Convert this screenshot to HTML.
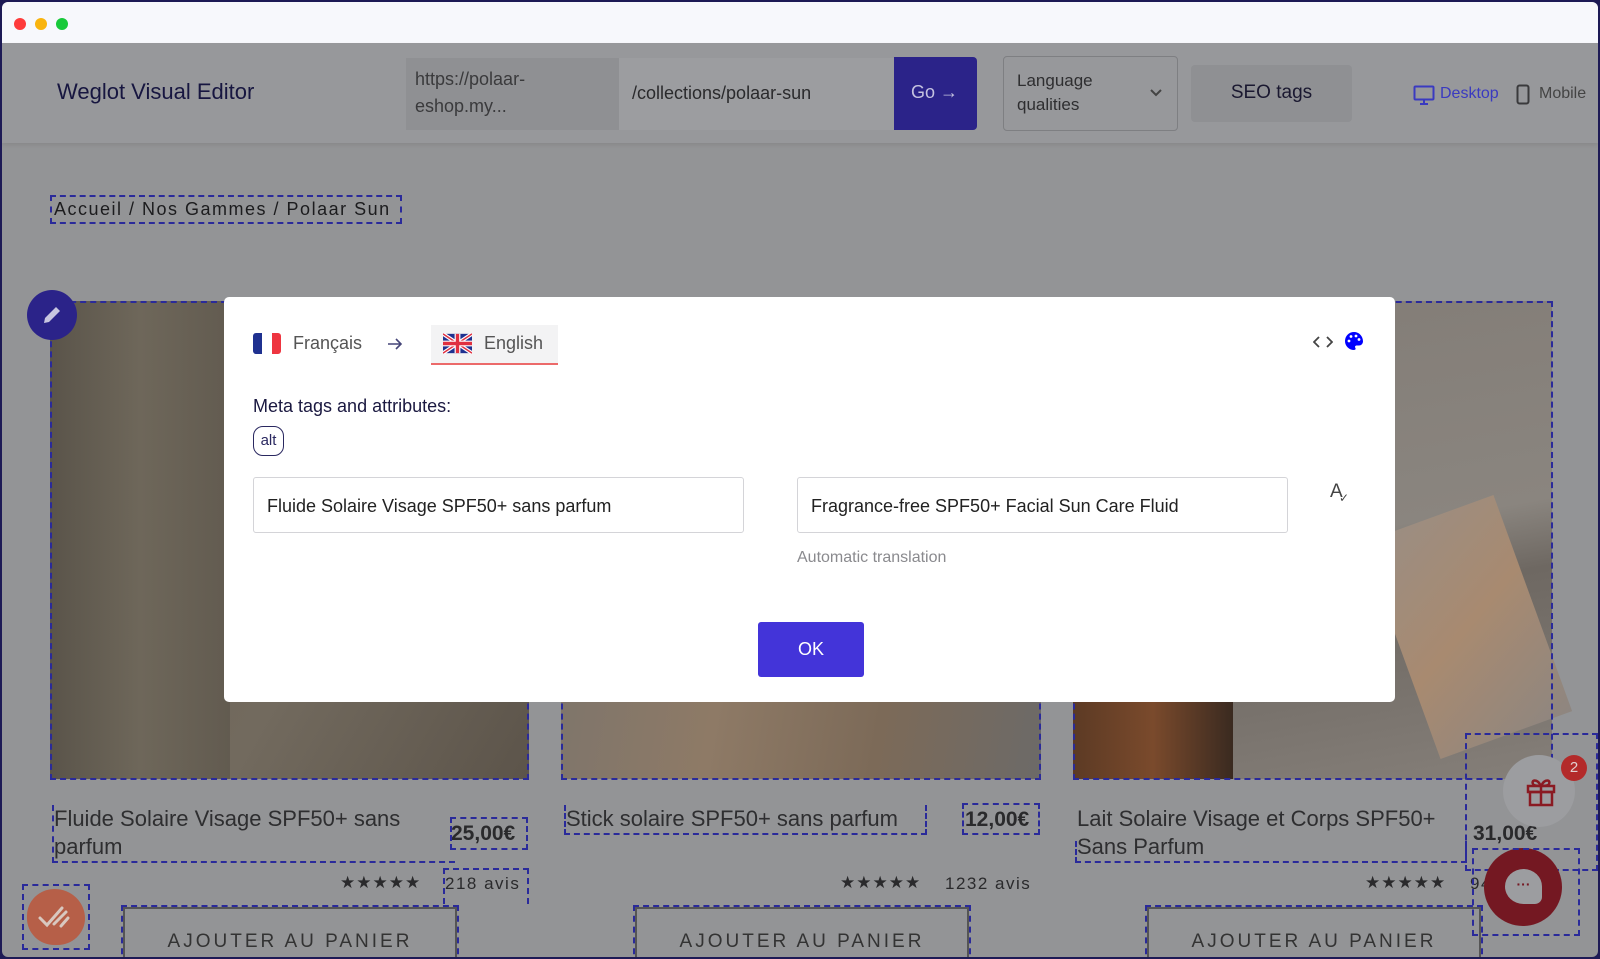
<!DOCTYPE html>
<html><head><meta charset="utf-8"><style>
*{box-sizing:border-box;margin:0;padding:0}
body{width:1600px;height:959px;overflow:hidden;background:#1d1a55;font-family:"Liberation Sans",sans-serif;position:relative}
.abs{position:absolute}
#win{position:absolute;left:2px;top:2px;width:1596px;height:955px;background:#939496;overflow:hidden;border-radius:6px}
.dash{position:absolute;border:2px dashed #2a2a9a}
.ptitle{position:absolute;font-size:22px;color:#2e2e30;line-height:28px}
.price{position:absolute;font-size:21px;font-weight:bold;color:#2a2a2c}
.btn{position:absolute;border:2px solid #555;height:60px;font-size:19px;letter-spacing:3px;color:#333;text-align:center;padding-top:22px}
.stars{position:absolute;font-size:17px;color:#2a2a2c;letter-spacing:1px}
.avis{position:absolute;font-size:17px;color:#2a2a2c;letter-spacing:1.5px}
</style></head><body>
<div id="win">
 <div class="abs" style="left:0;top:0;width:1596px;height:41px;background:#f7f8fc"></div>
 <div class="abs" style="left:12px;top:16px;width:12px;height:12px;border-radius:50%;background:#fe3b3b"></div>
 <div class="abs" style="left:33px;top:16px;width:12px;height:12px;border-radius:50%;background:#f9b40e"></div>
 <div class="abs" style="left:54px;top:16px;width:12px;height:12px;border-radius:50%;background:#18c93a"></div>
 <div class="abs" style="left:0;top:41px;width:1596px;height:100px;background:#97989b;box-shadow:0 2px 4px rgba(0,0,0,.08)"></div>
 <div class="abs" style="left:55px;top:77px;font-size:22px;color:#171640">Weglot Visual Editor</div>
 <div class="abs" style="left:404px;top:56px;width:213px;height:72px;background:#8f9093;color:#3a3a3c;font-size:18px;line-height:27px;padding:8px 9px">https://polaar-<br>eshop.my...</div>
 <div class="abs" style="left:617px;top:56px;width:275px;height:72px;background:#9c9da0;color:#2a2a2c;font-size:18px;padding-top:25px;padding-left:13px">/collections/polaar-sun</div>
 <div class="abs" style="left:892px;top:55px;width:83px;height:73px;background:#2b2389;border-radius:0 4px 4px 0;color:#c5c3e0;font-size:18px;padding-top:25px;padding-left:17px">Go →</div>
 <div class="abs" style="left:1001px;top:54px;width:175px;height:75px;border:1px solid #7e7f82;border-radius:4px;color:#2e2e30;font-size:17px;line-height:24px;padding:12px 13px">Language<br>qualities</div>
 <svg class="abs" style="left:1148px;top:87px" width="12" height="8" viewBox="0 0 12 8"><path d="M1 1l5 5 5-5" stroke="#444" stroke-width="2" fill="none"/></svg>
 <div class="abs" style="left:1189px;top:63px;width:161px;height:57px;background:#8f9093;border-radius:4px;color:#1a1830;font-size:19px;text-align:center;padding-top:17px">SEO tags</div>
 <svg class="abs" style="left:1411px;top:83px" width="22" height="20" viewBox="0 0 22 20"><rect x="1.5" y="1.5" width="19" height="13" rx="1" fill="none" stroke="#3a3ac0" stroke-width="2"/><path d="M7 19h8M11 15v4" stroke="#3a3ac0" stroke-width="2"/></svg>
 <div class="abs" style="left:1438px;top:83px;font-size:16px;color:#3a3ac0">Desktop</div>
 <svg class="abs" style="left:1514px;top:82px" width="14" height="21" viewBox="0 0 14 21"><rect x="1.5" y="1.5" width="11" height="18" rx="2" fill="none" stroke="#3a3a3c" stroke-width="2"/></svg>
 <div class="abs" style="left:1537px;top:83px;font-size:16px;color:#444">Mobile</div>
 <div class="dash" style="left:48px;top:193px;width:352px;height:29px"></div>
 <div class="abs" style="left:52px;top:197px;font-size:18px;color:#1c1c1e;letter-spacing:1.5px">Accueil / Nos Gammes / Polaar Sun</div>
 <!-- product images -->
 <div class="abs" style="left:48px;top:299px;width:479px;height:478px;background:linear-gradient(120deg,#5e564c 0%,#6e6558 35%,#726a5e 60%,#5c544a 100%)"></div>
 <div class="abs" style="left:48px;top:299px;width:180px;height:478px;background:linear-gradient(90deg,#5a544a,#6e675a,#625b50)"></div>
 <div class="dash" style="left:48px;top:299px;width:479px;height:479px"></div>
 <div class="abs" style="left:559px;top:299px;width:480px;height:478px;background:linear-gradient(100deg,#78736d 0%,#8e7a66 40%,#7c6a58 70%,#6c6a68 100%)"></div>
 <div class="dash" style="left:559px;top:299px;width:480px;height:479px"></div>
 <div class="abs" style="left:1071px;top:299px;width:479px;height:478px;background:linear-gradient(170deg,#827c76 0%,#8a857f 50%,#6e6862 62%,#857f79 100%)"></div>
 <div class="abs" style="left:1071px;top:700px;width:160px;height:77px;background:linear-gradient(90deg,#5c3a24,#7a4a2c,#3a2a20)"></div>
 <div class="abs" style="left:1395px;top:510px;width:140px;height:230px;background:linear-gradient(150deg,#9a8e84,#a88a70 50%,#8e8680);transform:rotate(-20deg)"></div>
 <div class="dash" style="left:1071px;top:299px;width:480px;height:479px"></div>
 <!-- pencil -->
 <div class="abs" style="left:25px;top:288px;width:50px;height:50px;border-radius:50%;background:#2b2389"></div>
 <svg class="abs" style="left:39px;top:302px" width="22" height="22" viewBox="0 0 22 22"><path d="M3 19l1-5L15 3l4 4L8 18z" fill="#c8c6e0"/></svg>
 <!-- titles -->
 <div class="ptitle" style="left:52px;top:803px;width:400px">Fluide Solaire Visage SPF50+ sans parfum</div>
 <div class="dash" style="left:50px;top:803px;width:403px;height:58px;border-top:none;border-right:none"></div>
 <div class="price" style="left:449px;top:820px">25,00€</div>
 <div class="dash" style="left:448px;top:815px;width:78px;height:33px"></div>
 <div class="stars" style="left:338px;top:871px">★★★★★</div>
 <div class="avis" style="left:443px;top:872px">218 avis</div>
 <div class="dash" style="left:441px;top:866px;width:86px;height:36px;border-bottom:none"></div>

 <div class="ptitle" style="left:564px;top:803px">Stick solaire SPF50+ sans parfum</div>
 <div class="dash" style="left:562px;top:803px;width:363px;height:30px;border-top:none"></div>
 <div class="price" style="left:963px;top:806px">12,00€</div>
 <div class="dash" style="left:960px;top:801px;width:78px;height:32px"></div>
 <div class="stars" style="left:838px;top:871px">★★★★★</div>
 <div class="avis" style="left:943px;top:872px">1232 avis</div>

 <div class="ptitle" style="left:1075px;top:803px;width:380px">Lait Solaire Visage et Corps SPF50+ Sans Parfum</div>
 <div class="dash" style="left:1073px;top:839px;width:392px;height:22px;border-top:none"></div>
 <div class="price" style="left:1471px;top:820px">31,00€</div>
 <div class="dash" style="left:1463px;top:731px;width:133px;height:138px"></div>
 <div class="stars" style="left:1363px;top:871px">★★★★★</div>
 <div class="avis" style="left:1468px;top:872px">94</div>

 <div class="btn" style="left:121px;top:905px;width:334px">AJOUTER AU PANIER</div>
 <div class="dash" style="left:119px;top:903px;width:338px;height:60px"></div>
 <div class="btn" style="left:633px;top:905px;width:334px">AJOUTER AU PANIER</div>
 <div class="dash" style="left:631px;top:903px;width:338px;height:60px"></div>
 <div class="btn" style="left:1145px;top:905px;width:334px">AJOUTER AU PANIER</div>
 <div class="dash" style="left:1143px;top:903px;width:338px;height:60px"></div>
 <div class="dash" style="left:20px;top:882px;width:68px;height:66px"></div>
 <div class="abs" style="left:25px;top:887px;width:58px;height:56px;border-radius:50% 55% 50% 50%;background:#b65f48"></div>
 <svg class="abs" style="left:34px;top:898px" width="40" height="34" viewBox="0 0 40 34"><path d="M4 18l7 7L26 8M18 24l12-12M25 26l7-8" stroke="#d8c8c0" stroke-width="3" fill="none" stroke-linecap="round"/></svg>
 <div class="abs" style="left:1501px;top:753px;width:72px;height:72px;border-radius:50%;background:#9c9da0"></div>
 <svg class="abs" style="left:1523px;top:773px" width="32" height="32" viewBox="0 0 32 32"><rect x="3" y="11" width="26" height="6" fill="none" stroke="#8a1a22" stroke-width="2.5"/><rect x="5" y="17" width="22" height="13" fill="none" stroke="#8a1a22" stroke-width="2.5"/><path d="M16 11v19M16 11c-4-8-10-6-8-2 1 2 8 2 8 2 0 0 7 0 8-2 2-4-4-6-8 2" stroke="#8a1a22" stroke-width="2.5" fill="none"/></svg>
 <div class="abs" style="left:1559px;top:753px;width:26px;height:26px;border-radius:50%;background:#b32a2a;color:#e0d0d0;font-size:15px;text-align:center;line-height:26px">2</div>
 <div class="abs" style="left:1482px;top:846px;width:78px;height:78px;border-radius:50%;background:#741822"></div>
 <div class="abs" style="left:1503px;top:867px;width:37px;height:35px;border-radius:50% 50% 20% 50%;background:#9c9da0;color:#741822;font-size:14px;text-align:center;line-height:30px;font-weight:bold">···</div>
 <div class="dash" style="left:1470px;top:846px;width:108px;height:88px"></div>

 <div class="abs" style="left:222px;top:295px;width:1171px;height:405px;background:#fff;border-radius:5px">
  <div class="abs" style="left:29px;top:36px;width:28px;height:21px;border-radius:3px;overflow:hidden;display:flex"><div style="flex:1;background:#1f3190"></div><div style="flex:1;background:#fff"></div><div style="flex:1;background:#ee3540"></div></div>
  <div class="abs" style="left:69px;top:36px;font-size:18px;color:#555">Français</div>
  <svg class="abs" style="left:163px;top:41px" width="16" height="12" viewBox="0 0 16 12"><path d="M1 6h13M9 1l5 5-5 5" stroke="#454578" stroke-width="1.6" fill="none"/></svg>
  <div class="abs" style="left:207px;top:28px;width:127px;height:40px;background:#f3f3f4;border-bottom:2px solid #ec6a6a"></div>
  <svg class="abs" style="left:219px;top:36px" width="29" height="21" viewBox="0 0 60 40"><rect width="60" height="40" fill="#1f3190"/><path d="M0 0L60 40M60 0L0 40" stroke="#fff" stroke-width="8"/><path d="M0 0L60 40M60 0L0 40" stroke="#e03040" stroke-width="3"/><path d="M30 0v40M0 20h60" stroke="#fff" stroke-width="12"/><path d="M30 0v40M0 20h60" stroke="#e03040" stroke-width="7"/></svg>
  <div class="abs" style="left:260px;top:36px;font-size:18px;color:#555">English</div>
  <svg class="abs" style="left:1089px;top:39px" width="20" height="12" viewBox="0 0 20 12"><path d="M6 1L1 6l5 5M14 1l5 5-5 5" stroke="#444" stroke-width="1.8" fill="none"/></svg>
  <svg class="abs" style="left:1120px;top:34px" width="20" height="20" viewBox="0 0 20 20"><path d="M10 1a9 9 0 0 0 0 18c1.5 0 2-1 1.3-2.2-.7-1.2 0-2.3 1.5-2.3H15a4 4 0 0 0 4-4C19 5 15 1 10 1z" fill="#0000ff"/><circle cx="5" cy="10" r="1.4" fill="#fff"/><circle cx="7" cy="5.5" r="1.4" fill="#fff"/><circle cx="12" cy="5" r="1.4" fill="#fff"/><circle cx="15" cy="8.5" r="1.4" fill="#fff"/></svg>
  <div class="abs" style="left:29px;top:99px;font-size:18px;color:#1a1840">Meta tags and attributes:</div>
  <div class="abs" style="left:29px;top:129px;width:31px;height:30px;border:1.5px solid #2a2860;border-radius:10px;font-size:15px;color:#2a2860;text-align:center;line-height:27px">alt</div>
  <div class="abs" style="left:29px;top:180px;width:491px;height:56px;border:1px solid #d4d4d8;border-radius:3px;font-size:18px;color:#222;padding:18px 13px">Fluide Solaire Visage SPF50+ sans parfum</div>
  <div class="abs" style="left:573px;top:180px;width:491px;height:56px;border:1px solid #d4d4d8;border-radius:3px;font-size:18px;color:#222;padding:18px 13px">Fragrance-free SPF50+ Facial Sun Care Fluid</div>
  <div class="abs" style="left:1106px;top:184px;font-size:19px;color:#444">A</div>
  <div class="abs" style="left:1115px;top:194px;font-size:12px;color:#444">✓</div>
  <div class="abs" style="left:573px;top:252px;font-size:16px;color:#8a8a8e">Automatic translation</div>
  <div class="abs" style="left:534px;top:325px;width:106px;height:55px;background:#4334d9;border-radius:3px;color:#fff;font-size:18px;text-align:center;line-height:55px">OK</div>
 </div>
</div>
</body></html>
